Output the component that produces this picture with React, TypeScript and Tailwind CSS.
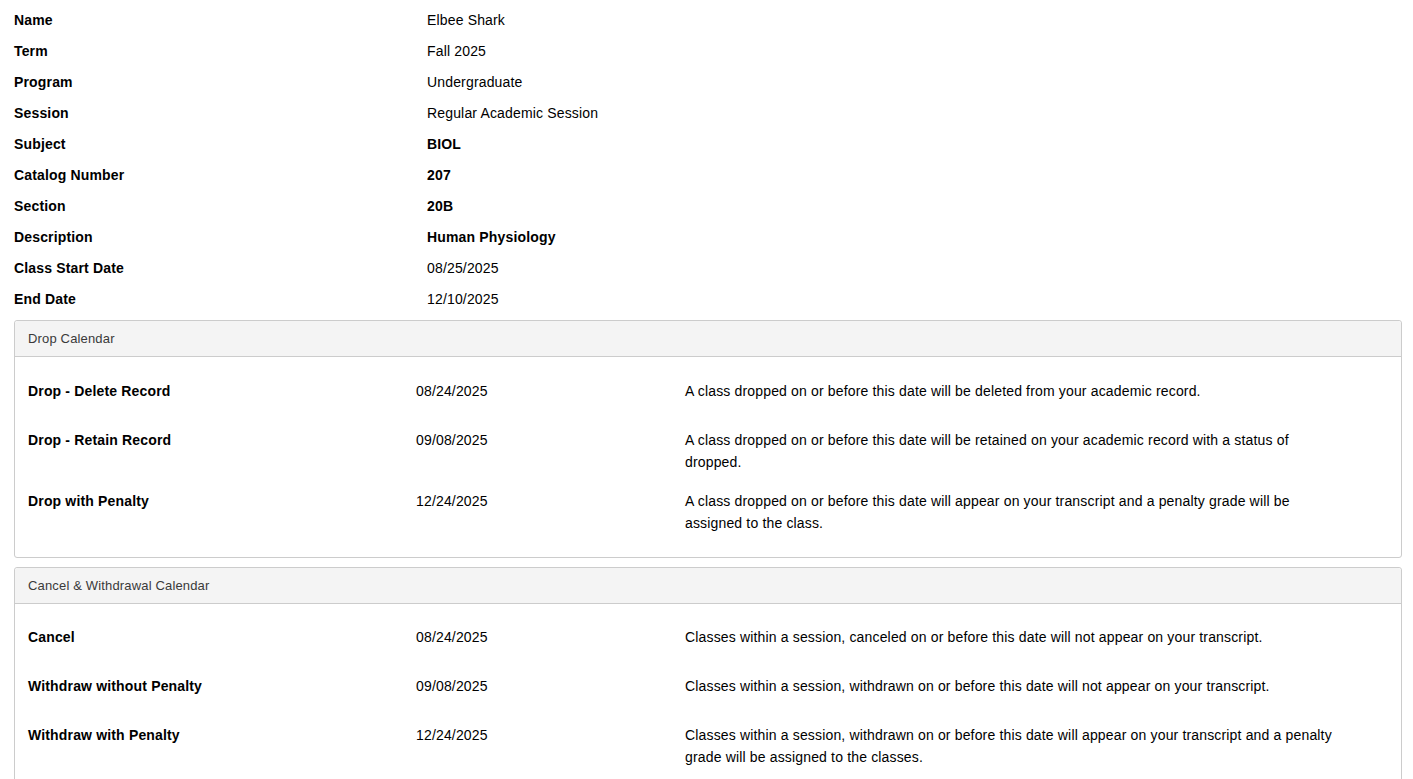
import React from 'react';

type Info = { label: string; value: string; strong?: boolean };
type CalRow = { label: string; date: string; text: string };

const INFO: Info[] = [
  { label: 'Name', value: 'Elbee Shark' },
  { label: 'Term', value: 'Fall 2025' },
  { label: 'Program', value: 'Undergraduate' },
  { label: 'Session', value: 'Regular Academic Session' },
  { label: 'Subject', value: 'BIOL', strong: true },
  { label: 'Catalog Number', value: '207', strong: true },
  { label: 'Section', value: '20B', strong: true },
  { label: 'Description', value: 'Human Physiology', strong: true },
  { label: 'Class Start Date', value: '08/25/2025' },
  { label: 'End Date', value: '12/10/2025' },
];

const DROP: CalRow[] = [
  {
    label: 'Drop - Delete Record',
    date: '08/24/2025',
    text: 'A class dropped on or before this date will be deleted from your academic record.',
  },
  {
    label: 'Drop - Retain Record',
    date: '09/08/2025',
    text: 'A class dropped on or before this date will be retained on your academic record with a status of dropped.',
  },
  {
    label: 'Drop with Penalty',
    date: '12/24/2025',
    text: 'A class dropped on or before this date will appear on your transcript and a penalty grade will be assigned to the class.',
  },
];

const WITHDRAW: CalRow[] = [
  {
    label: 'Cancel',
    date: '08/24/2025',
    text: 'Classes within a session, canceled on or before this date will not appear on your transcript.',
  },
  {
    label: 'Withdraw without Penalty',
    date: '09/08/2025',
    text: 'Classes within a session, withdrawn on or before this date will not appear on your transcript.',
  },
  {
    label: 'Withdraw with Penalty',
    date: '12/24/2025',
    text: 'Classes within a session, withdrawn on or before this date will appear on your transcript and a penalty grade will be assigned to the classes.',
  },
];

function Panel({ title, rows, body }: { title: string; rows: CalRow[]; body: string }) {
  return (
    <div className="ml-[14px] mr-[11px] border border-[#cccccc] rounded-[3px] bg-white">
      <div className="h-[36px] flex items-center px-[13px] bg-[#f4f4f4] border-b border-[#cccccc] rounded-t-[3px] text-[13px] text-[#3a3a3a]">
        {title}
      </div>
      <div className={`px-[13px] ${body}`}>
        {rows.map(r => (
          <div key={r.label} className="flex min-h-[49px] pb-[17px] leading-[22px]">
            <div className="w-[388px] shrink-0 font-bold">{r.label}</div>
            <div className="w-[269px] shrink-0">{r.date}</div>
            <div className="w-[656px]">{r.text}</div>
          </div>
        ))}
      </div>
    </div>
  );
}

export default function App() {
  return (
    <div className="min-h-screen bg-white text-black text-[14px] tracking-[0.16px] font-['Liberation_Sans',Arial,sans-serif]">
      {/* Class details */}
      <div className="px-[14px] pt-[5px]">
        {INFO.map(i => (
          <div key={i.label} className="flex h-[31px] items-center">
            <div className="w-[413px] shrink-0 font-bold">{i.label}</div>
            <div className={i.strong ? 'font-bold' : ''}>{i.value}</div>
          </div>
        ))}
      </div>

      <div className="mt-[5px]">
        <Panel title="Drop Calendar" rows={DROP} body="pt-[23px] pb-[6px]" />
      </div>
      <div className="mt-[9px]">
        <Panel title="Cancel & Withdrawal Calendar" rows={WITHDRAW} body="pt-[22px] pb-[5px]" />
      </div>
    </div>
  );
}
